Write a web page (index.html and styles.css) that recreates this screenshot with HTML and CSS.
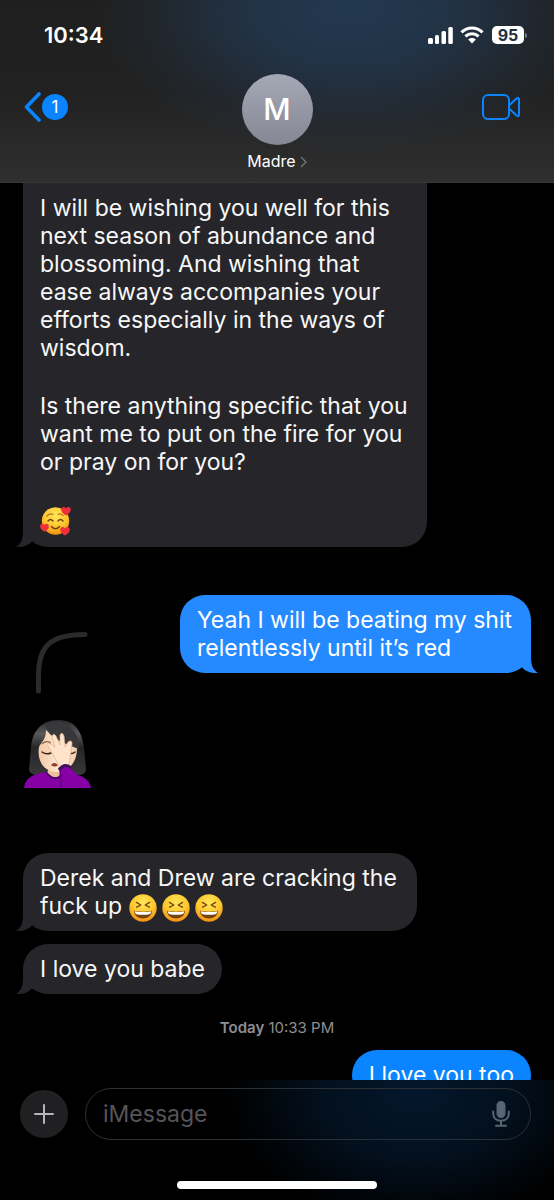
FILE: index.html
```html
<!DOCTYPE html>
<html lang="en">
<head>
  <meta charset="UTF-8" />
  <meta name="viewport" content="width=device-width, initial-scale=1.0"/>
  <title>Madre</title>
  <link rel="stylesheet" href="styles.css">
</head>
<body>
  <!-- Shared shapes -->
  <svg class="sprite" aria-hidden="true">
    <defs>
      <radialGradient id="face" cx="50%" cy="30%" r="72%">
        <stop offset="0" stop-color="#ffe75a"/>
        <stop offset="0.6" stop-color="#fdc62c"/>
        <stop offset="1" stop-color="#f08a12"/>
      </radialGradient>
      <linearGradient id="hair" x1="0" y1="0" x2="0" y2="1">
        <stop offset="0" stop-color="#2a2a2c"/>
        <stop offset="0.25" stop-color="#59595c"/>
        <stop offset="0.5" stop-color="#262628"/>
        <stop offset="1" stop-color="#38383a"/>
      </linearGradient>
      <linearGradient id="skin" x1="0" y1="0" x2="1" y2="0">
        <stop offset="0" stop-color="#f3c9a5"/>
        <stop offset="0.5" stop-color="#ffe6cf"/>
        <stop offset="1" stop-color="#f5cfae"/>
      </linearGradient>
    </defs>
    <symbol id="tail" viewBox="0 0 18 24">
      <path d="M7 0V8C7 16 5 21 0 24C7 24.5 13 22 16 18.5V0Z" fill="currentColor"/>
    </symbol>
    <symbol id="heart" viewBox="0 0 10 10">
      <path d="M5 9.6C2 7.8 0 5.8 0.2 3.2C0.4 0.6 3.8 0 5 2.5C6.2 0 9.6 0.6 9.8 3.2C10 5.8 8 7.8 5 9.6Z" fill="#ef2f3c"/>
    </symbol>
    <symbol id="laugh" viewBox="0 0 28 28">
      <circle cx="14" cy="14" r="13.7" fill="url(#face)"/>
      <path d="M7.4 8.4L11.8 11L7.6 13.2M20.6 8.4L16.2 11L20.4 13.2" fill="none" stroke="#754010" stroke-width="1.3" stroke-linecap="round" stroke-linejoin="round"/>
      <path d="M5 16.8Q14 18.6 23 16.8C22.6 22 19 24.4 14 24.4C9 24.4 5.4 22 5 16.8Z" fill="#76430f"/>
      <path d="M5.8 17.2Q14 18.9 22.2 17.2C22 19 21.4 19.8 20.6 20.2Q14 21.4 7.4 20.2C6.6 19.8 6 19 5.8 17.2Z" fill="#fff"/>
    </symbol>
  </svg>

  <div class="phone">
    <header class="header">
      <div class="status-bar">
        <time class="clock">10:34</time>
        <div class="status-icons">
          <svg width="25" height="17" viewBox="0 0 25 17" fill="#fff" aria-label="Signal">
            <rect x="0" y="11" width="5" height="6" rx="1.5"/>
            <rect x="7" y="8" width="4" height="9" rx="1.5"/>
            <rect x="13.5" y="4" width="4.5" height="13" rx="1.5"/>
            <rect x="20.3" y="0" width="4.5" height="17" rx="1.5"/>
          </svg>
          <svg width="24" height="18" viewBox="0 0 24 18" fill="none" stroke="#fff" stroke-width="3" aria-label="Wi-Fi">
            <path d="M1.5 6.4C7.4 0.4 16.6 0.4 22.5 6.4"/>
            <path d="M5.4 10.4C9.2 6.7 14.8 6.7 18.6 10.4"/>
            <path d="M12 17.4L8.2 13.6C10.4 11.6 13.6 11.6 15.8 13.6Z" fill="#fff" stroke="none"/>
          </svg>
          <span class="battery">95</span>
        </div>
      </div>

      <nav class="nav">
        <button class="back-btn" type="button" aria-label="Back, 1 unread">
          <svg width="17" height="30" viewBox="0 0 17 30" fill="none" stroke="currentColor" stroke-width="3.6" stroke-linecap="round" stroke-linejoin="round">
            <path d="M15 2L2.5 15L15 28"/>
          </svg>
          <span class="unread">1</span>
        </button>
        <button class="contact" type="button">
          <span class="avatar">M</span>
          <span class="contact-name">Madre
            <svg width="7" height="12" viewBox="0 0 7 12" fill="none" stroke="#77777b" stroke-width="1.3">
              <path d="M1 1L6 6L1 11"/>
            </svg>
          </span>
        </button>
        <button class="video-btn" type="button" aria-label="FaceTime">
          <svg width="38" height="26" viewBox="0 0 38 26" fill="none" stroke="currentColor" stroke-width="2" stroke-linejoin="round">
            <rect x="1" y="1" width="26" height="24" rx="5"/>
            <path d="M27 11.5L34.5 4.5Q37 2.8 37 5.5V20.5Q37 23.2 34.5 21.5L27 14.5Z"/>
          </svg>
        </button>
      </nav>
    </header>

    <main class="messages">
      <div class="bubble received continued">
        <p>I will be wishing you well for this next season of abundance and blossoming. And wishing that ease always accompanies your efforts especially in the ways of wisdom.</p>
        <p>Is there anything specific that you want me to put on the fire for you or pray on for you?</p>
        <p>
          <svg class="emoji-love" viewBox="0 0 32 30" role="img" aria-label="Smiling face with hearts">
            <circle cx="15.5" cy="15" r="13.7" fill="url(#face)"/>
            <path d="M7 10Q9.5 7 13 8.4M18 8.4Q20.5 7 23 9.5" fill="none" stroke="#b9741a" stroke-width="1.2" stroke-linecap="round"/>
            <path d="M8 15Q10.5 11.8 13 15M18 15Q20.5 11.8 23 15M11.5 20.5Q15.5 25 19.5 20.5" fill="none" stroke="#754010" stroke-width="1.5" stroke-linecap="round"/>
            <use href="#heart" x="21" y="0" width="10" height="10"/>
            <use href="#heart" x="0" y="17" width="9" height="9"/>
            <use href="#heart" x="20" y="20" width="10" height="10"/>
          </svg>
        </p>
        <svg class="tail"><use href="#tail"/></svg>
      </div>

      <div class="bubble sent older">
        <p>Yeah I will be beating my shit relentlessly until it’s red</p>
        <svg class="tail"><use href="#tail"/></svg>
      </div>

      <!-- Reply to the message above -->
      <div class="sticker">
        <svg class="reply-line" viewBox="0 0 54 64" fill="none" stroke="#2b2b2d" stroke-width="5" stroke-linecap="round">
          <path d="M3.5 60V45C3.5 16 14 3.5 50 3.5"/>
        </svg>
        <svg class="facepalm" viewBox="0 0 68 70" role="img" aria-label="Woman facepalming">
          <path d="M34 1C16 1 8 14 7 29L5 50Q5 55 12 56H56Q62 55 62 50L60 29C58 11 50 1 34 1Z" fill="url(#hair)"/>
          <path d="M26 46H42V58L34 64L22 57Z" fill="#eebf9b"/>
          <path d="M22 11C22 21 17 23 15 28C13 40 18 52 32 53C46 52 53 43 53 29C46 25 32 22 22 11Z" fill="url(#skin)"/>
          <path d="M22 5C22 17 36 23 55 30C56 15 45 4 34 2Z" fill="#38383b"/>
          <path d="M0 69C1 58 10 55 22 53Q29 63 37 55Q50 54 59 58Q66 62 67 69Z" fill="#8500a5"/>
          <path d="M22 53Q29 63 39 57" fill="none" stroke="#4e006c" stroke-width="1.8"/>
          <path d="M18 33Q22 36 27 34M44 33Q48 36 51 33" fill="none" stroke="#3a241b" stroke-width="1.4" stroke-linecap="round"/>
          <path d="M18 25Q22 21 27 24" fill="none" stroke="#856551" stroke-width="1.2"/>
          <path d="M27 46Q30 42 34 46Q31 49 27 46Z" fill="#8f3d2a"/>
          <path d="M35 50C34 42 31 40 28 34L24 27Q23 23 27 25L31 28L28 18Q29 13 32 17L36 26L36 16Q38 12 40 17L41 28L44 23Q48 20 48 25L46 40Q46 45 42 49Z" fill="#ffe3ca" stroke="#dcaf8d" stroke-width="0.7"/>
          <path d="M35 50Q42 43 48 50C51 56 62 60 67 69H37Z" fill="#8500a5"/>
          <path d="M35 51Q41 43 47 49" fill="none" stroke="#41105a" stroke-width="3"/>
          <path d="M37 54V69" stroke="#57007a" stroke-width="1.2"/>
        </svg>
      </div>

      <div class="bubble received medium">
        <p>Derek and Drew are cracking the fuck up
          <svg class="emoji" role="img" aria-label="Laughing"><use href="#laugh"/></svg><svg class="emoji" role="img" aria-label="Laughing"><use href="#laugh"/></svg><svg class="emoji" role="img" aria-label="Laughing"><use href="#laugh"/></svg>
        </p>
        <svg class="tail"><use href="#tail"/></svg>
      </div>

      <div class="bubble received">
        <p>I love you babe</p>
        <svg class="tail"><use href="#tail"/></svg>
      </div>

      <div class="timestamp"><b>Today</b> 10:33 PM</div>

      <div class="bubble sent">
        <p>I love you too</p>
      </div>
    </main>

    <footer class="footer">
      <form class="composer">
        <button class="add-btn" type="button" aria-label="Add">
          <svg width="20" height="20" viewBox="0 0 20 20" stroke="currentColor" stroke-width="2" stroke-linecap="round">
            <path d="M10 1V19M1 10H19"/>
          </svg>
        </button>
        <div class="field">
          <input type="text" placeholder="iMessage" aria-label="iMessage" />
          <button class="mic-btn" type="button" aria-label="Dictate">
            <svg width="18" height="26" viewBox="0 0 18 26" fill="none" stroke="currentColor" stroke-width="2" stroke-linecap="round">
              <rect x="5.5" y="1" width="7" height="15" rx="3.5" fill="currentColor"/>
              <path d="M1.2 10.5V12.5C1.2 17 4.5 19.7 9 19.7S16.8 17 16.8 12.5V10.5M9 20V24.5M4 24.8H14"/>
            </svg>
          </button>
        </div>
      </form>
      <div class="home-indicator"></div>
    </footer>
  </div>
</body>
</html>
```

FILE: styles.css
```css
* {
  box-sizing: border-box;
}

body {
  margin: 0;
  background-color: #000;
  color: #fff;
  font-family: Inter, Roboto, sans-serif;
}

button {
  padding: 0;
  border: none;
  background: none;
  color: #0a84ff;
  font-family: inherit;
  cursor: pointer;
}

svg {
  flex-shrink: 0;
}

.sprite {
  position: absolute;
  width: 0;
  height: 0;
}

.phone {
  display: flex;
  flex-direction: column;
  height: 100vh;
  overflow: hidden;
}

/* Header */
.header {
  flex-shrink: 0;
  padding-bottom: 10px;
  border-bottom: 1px solid #39393b;
  background:
    radial-gradient(ellipse 46% 80% at 63% 5%, #22384f 0%, rgba(34, 54, 76, 0.85) 40%, rgba(34, 54, 76, 0.3) 75%, transparent 100%),
    linear-gradient(#1f1f1f, #212121 50%, #2f2f30);
}

.status-bar {
  display: flex;
  justify-content: space-between;
  align-items: center;
  height: 74px;
  padding: 0 30px 4px 44px;
}

.clock {
  font-size: 22px;
  font-weight: 600;
}

.status-icons {
  display: flex;
  align-items: center;
  gap: 7px;
}

.battery {
  position: relative;
  width: 32px;
  margin-left: 1px;
  border-radius: 5px;
  background-color: #fff;
  color: #22303f;
  font-size: 16px;
  font-weight: 700;
  line-height: 18px;
  text-align: center;
}

.battery::after {
  content: "";
  position: absolute;
  top: 7px;
  right: -3px;
  width: 2px;
  height: 5px;
  border-radius: 0 2px 2px 0;
  background-color: #717b86;
}

.nav {
  display: grid;
  grid-template-columns: 1fr auto 1fr;
  align-items: start;
  padding: 0 34px 0 24px;
}

.back-btn {
  display: flex;
  align-items: center;
  gap: 1px;
  justify-self: start;
  margin-top: 18px;
}

.unread {
  width: 26px;
  border-radius: 50%;
  background-color: #0a84ff;
  color: #fff;
  font-size: 17px;
  line-height: 26px;
  text-align: center;
}

.contact {
  display: flex;
  flex-direction: column;
  align-items: center;
  gap: 6px;
  margin-left: 10px;
  color: #fff;
}

.avatar {
  width: 71px;
  border-radius: 50%;
  background: linear-gradient(#a5a8b6, #858892);
  font-size: 30px;
  font-weight: 500;
  line-height: 71px;
}

.contact-name {
  display: flex;
  align-items: center;
  gap: 4px;
  font-size: 16px;
  line-height: 21px;
}

.video-btn {
  justify-self: end;
  margin-top: 20px;
}

.video-btn svg,
.back-btn svg {
  display: block;
}

/* Conversation */
.messages {
  display: flex;
  flex: 1;
  flex-direction: column;
  align-items: flex-start;
  min-height: 0;
  padding: 0 23px;
  overflow: hidden;
}

.bubble {
  position: relative;
  flex-shrink: 0;
  max-width: 404px;
  padding: 11px 17px;
  border-radius: 25px;
  font-size: 23px;
  line-height: 28px;
}

.bubble p {
  margin: 0;
}

.bubble p + p {
  margin-top: 30px;
}

.received {
  background-color: #26262a;
  color: #f7f7f8;
}

.received + .received {
  margin-top: 13px;
}

.continued {
  border-radius: 0 0 25px 25px;
}

.medium {
  max-width: 394px;
}

.sent {
  align-self: flex-end;
  max-width: 351px;
  background-color: #0a84ff;
}

.older {
  margin-top: 48px;
  background-color: #258aff;
}

.tail {
  position: absolute;
  bottom: 0;
  left: -7px;
  width: 18px;
  height: 24px;
  color: #26262a;
}

.sent .tail {
  right: -7px;
  left: auto;
  color: #258aff;
  transform: scaleX(-1);
}

.emoji {
  width: 28px;
  height: 28px;
  margin: -4px 5px -4px 0;
  vertical-align: middle;
}

.emoji-love {
  display: block;
  width: 32px;
  height: 30px;
}

.sticker {
  position: relative;
  flex-shrink: 0;
  margin: 46px 0 64px 1px;
}

.facepalm {
  display: block;
  width: 68px;
  height: 70px;
}

.reply-line {
  position: absolute;
  bottom: 94px;
  left: 11px;
  width: 54px;
  height: 64px;
}

.timestamp {
  flex-shrink: 0;
  align-self: center;
  margin: 24px 0 12px;
  color: #8e8e93;
  font-size: 15px;
  line-height: 20px;
}

.timestamp b {
  font-weight: 600;
}

/* Composer */
.footer {
  flex-shrink: 0;
  padding: 8px 0 11px;
  background: radial-gradient(ellipse 34% 110% at 75% 10%, #04172c 0%, #03101e 50%, #000 100%);
}

.composer {
  display: flex;
  align-items: center;
  gap: 17px;
  margin-bottom: 41px;
  padding: 0 23px 0 20px;
}

.add-btn {
  display: flex;
  justify-content: center;
  align-items: center;
  width: 48px;
  height: 48px;
  border-radius: 50%;
  background-color: #202022;
  color: #b6b6b8;
}

.field {
  display: flex;
  flex: 1;
  align-items: center;
  min-width: 0;
  height: 52px;
  padding: 0 20px 0 17px;
  border: 1px solid #2b3037;
  border-radius: 26px;
}

.field input {
  flex: 1;
  min-width: 0;
  padding: 0;
  border: none;
  outline: none;
  background: none;
  color: #fff;
  font-family: inherit;
  font-size: 23px;
}

.field input::placeholder {
  color: #555559;
  opacity: 1;
}

.mic-btn {
  display: flex;
  color: #586573;
}

.home-indicator {
  width: 36%;
  height: 8px;
  margin: 0 auto;
  border-radius: 4px;
  background-color: #fff;
}
```
